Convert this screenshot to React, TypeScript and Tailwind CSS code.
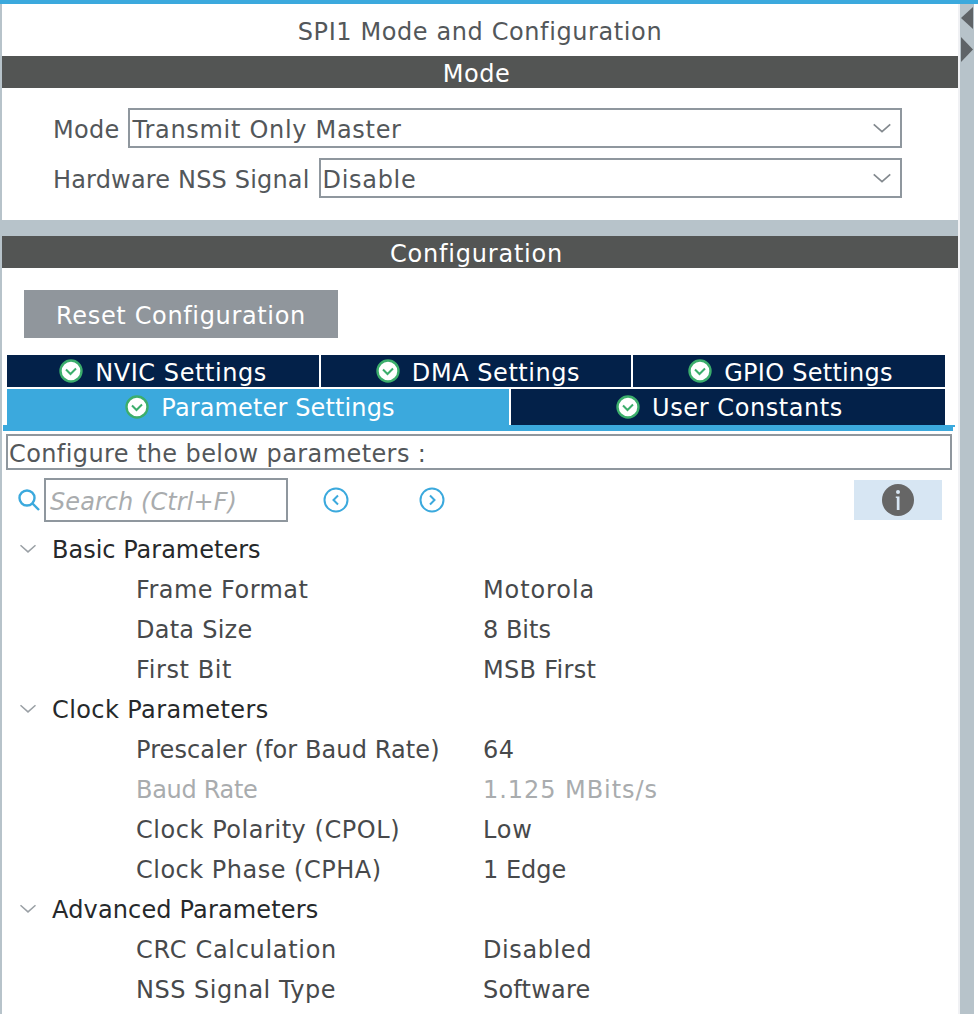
const font = "font-['DejaVu_Sans',sans-serif]";

function Chevron({ className }: { className: string }) {
  return (
    <svg viewBox="0 0 20 12" className={className} fill="none" stroke="currentColor" strokeWidth="1.8">
      <path d="M1 1.5 10 9.5 19 1.5" />
    </svg>
  );
}

function CheckIcon() {
  return (
    <svg viewBox="0 0 24 24" className="h-6 w-6 shrink-0">
      <circle cx="12" cy="12" r="10.5" fill="#fff" stroke="#3cae6c" strokeWidth="2.4" />
      <path d="M7 10.5 11.5 15 17 9.5" fill="none" stroke="#3cae6c" strokeWidth="2" />
    </svg>
  );
}

function Tab({ label, className, textClass }: { label: string; className: string; textClass: string }) {
  return (
    <div className={`flex items-center justify-center gap-3 text-white ${className}`}>
      <CheckIcon />
      <span className={textClass}>{label}</span>
    </div>
  );
}

function Select({ value, className }: { value: string; className: string }) {
  return (
    <div className={`flex h-10 flex-1 items-center justify-between border-2 border-[#8f979e] pr-2 ${className}`}>
      <span className="pt-1 tracking-[0.7px]">{value}</span>
      <Chevron className="h-[11px] w-5 text-[#83898e]" />
    </div>
  );
}

function NavButton({ dir }: { dir: "left" | "right" }) {
  return (
    <svg viewBox="0 0 26 26" className="h-[26px] w-[26px]" fill="none" stroke="#3ba9dd" strokeWidth="2">
      <circle cx="13" cy="13" r="11.5" />
      <path d={dir === "left" ? "M15 8.5 10.5 13 15 17.5" : "M11 8.5 15.5 13 11 17.5"} />
    </svg>
  );
}

type Param = { name: string; value: string; dim?: boolean; nameTrack: string; valueTrack: string };

const groups: { title: string; track: string; params: Param[] }[] = [
  {
    title: "Basic Parameters",
    track: "tracking-[0px]",
    params: [
      { name: "Frame Format", value: "Motorola", nameTrack: "tracking-[0.45px]", valueTrack: "tracking-[0.9px]" },
      { name: "Data Size", value: "8 Bits", nameTrack: "tracking-[0.25px]", valueTrack: "tracking-[0px]" },
      { name: "First Bit", value: "MSB First", nameTrack: "tracking-[0.6px]", valueTrack: "tracking-[0.3px]" },
    ],
  },
  {
    title: "Clock Parameters",
    track: "tracking-[0.4px]",
    params: [
      { name: "Prescaler (for Baud Rate)", value: "64", nameTrack: "tracking-[0.1px]", valueTrack: "tracking-[0.4px]" },
      { name: "Baud Rate", value: "1.125 MBits/s", dim: true, nameTrack: "tracking-[-0.3px]", valueTrack: "tracking-[0.95px]" },
      { name: "Clock Polarity (CPOL)", value: "Low", nameTrack: "tracking-[0.55px]", valueTrack: "tracking-[0.8px]" },
      { name: "Clock Phase (CPHA)", value: "1 Edge", nameTrack: "tracking-[0.5px]", valueTrack: "tracking-[0px]" },
    ],
  },
  {
    title: "Advanced Parameters",
    track: "tracking-[0.15px]",
    params: [
      { name: "CRC Calculation", value: "Disabled", nameTrack: "tracking-[0.7px]", valueTrack: "tracking-[0.6px]" },
      { name: "NSS Signal Type", value: "Software", nameTrack: "tracking-[0.5px]", valueTrack: "tracking-[0.2px]" },
    ],
  },
];

export default function App() {
  return (
    <div className={`flex h-[1014px] w-[978px] flex-col overflow-hidden bg-white text-[24px] leading-none text-[#53575a] ${font}`}>
      <div className="h-1 w-full shrink-0 bg-[#3ba9dd]" />
      <div className="flex min-h-0 flex-1">
        <div className="w-0.5 shrink-0 bg-[#b7c3ca]" />

        <div className="w-[956px] shrink-0 overflow-hidden bg-[#b7c3ca]">
          <div className="bg-white">
            <div className="flex h-[52px] items-center justify-center pt-[3px] tracking-[0.6px]">SPI1 Mode and Configuration</div>
            <div className="flex h-8 items-center justify-center bg-[#535554] pr-[7px] text-white">
              <span className="pt-1 tracking-[0.55px]">Mode</span>
            </div>
            <div className="flex h-[132px] flex-col gap-2.5 pl-[51px] pr-[56px] pt-5">
              <div className="flex items-center gap-2">
                <span className="pt-1 tracking-[0.3px]">Mode</span>
                <Select value="Transmit Only Master" className="pl-[3px]" />
              </div>
              <div className="flex items-center gap-[9px]">
                <span className="pt-1 tracking-[0.17px]">Hardware NSS Signal</span>
                <Select value="Disable" className="pl-0.5" />
              </div>
            </div>
          </div>

          <div className="mt-4 h-[778px] bg-white">
            <div className="flex h-8 items-center justify-center bg-[#535554] pr-[7px] text-white">
              <span className="pt-1 tracking-[0.8px]">Configuration</span>
            </div>

            <div className="ml-[22px] mt-[22px] flex h-12 w-[314px] items-center justify-center bg-[#90969c] text-white">
              <span className="pt-1 tracking-[0.65px]">Reset Configuration</span>
            </div>

            <div className="ml-[5px] mt-[17px] flex w-[938px] gap-0.5">
              <Tab label="NVIC Settings" textClass="pt-1 tracking-[0.57px]" className="h-8 w-[312px] bg-[#032149]" />
              <Tab label="DMA Settings" textClass="pt-1 tracking-[0.55px]" className="h-8 w-[310px] bg-[#032149] pl-1" />
              <Tab label="GPIO Settings" textClass="pt-1 tracking-[0.26px]" className="h-8 w-[312px] bg-[#032149] pl-[3px]" />
            </div>
            <div className="ml-[5px] mt-0.5 flex w-[938px] gap-0.5">
              <Tab label="Parameter Settings" textClass="pt-0.5 tracking-[0.13px]" className="h-9 w-[502px] bg-[#3ba9dd] pl-1" />
              <Tab label="User Constants" textClass="pt-0.5 tracking-[0.58px]" className="h-9 flex-1 bg-[#032149] pl-[3px]" />
            </div>
            <div className="ml-px h-0.5 w-[952px] bg-[#3ba9dd]" />
            <div className="ml-px h-1 w-[950px] bg-[#3ba9dd]" />

            <div className="ml-1 mt-[3px] flex h-9 w-[946px] items-center border-2 border-[#8f979e] pl-px">
              <span className="pt-1 tracking-[0.4px]">Configure the below parameters :</span>
            </div>

            <div className="mt-2 flex h-11 items-center">
              <svg viewBox="0 0 24 24" className="ml-[15px] h-6 w-6 shrink-0" fill="none" stroke="#3ba9dd" strokeWidth="2.4">
                <circle cx="10" cy="10" r="7.5" />
                <path d="M15.5 15.5 22 22" />
              </svg>
              <div className="ml-[3px] flex h-11 w-[244px] items-center border-2 border-[#8f979e] pl-1 italic text-[#a9acae]">
                <span className="pt-1 tracking-[0.07px]">Search (Ctrl+F)</span>
              </div>
              <div className="ml-[35px]"><NavButton dir="left" /></div>
              <div className="ml-[70px]"><NavButton dir="right" /></div>
              <div className="ml-[409px] flex h-10 w-[88px] items-center justify-center bg-[#d7e6f3]">
                <svg viewBox="0 0 32 32" className="h-8 w-8">
                  <circle cx="16" cy="16" r="16" fill="#666" />
                  <circle cx="16" cy="8" r="2" fill="#d7e6f3" />
                  <path d="M13.8 12.5H17.5V26H14.8V14H13.8Z" fill="#d7e6f3" />
                </svg>
              </div>
            </div>

            <div className="mt-[7px]">
              {groups.map((g) => (
                <div key={g.title}>
                  <div className="flex h-10 items-center text-[#26292b]">
                    <Chevron className="ml-[17px] h-2.5 w-[18px] text-[#9aa0a5]" />
                    <span className={`ml-[15px] pt-0.5 ${g.track}`}>{g.title}</span>
                  </div>
                  {g.params.map((p) => (
                    <div key={p.name} className={`flex h-10 items-center pl-[134px] ${p.dim ? "text-[#a9acae]" : "text-[#47494b]"}`}>
                      <span className={`w-[347px] pt-0.5 ${p.nameTrack}`}>{p.name}</span>
                      <span className={`pt-0.5 ${p.valueTrack}`}>{p.value}</span>
                    </div>
                  ))}
                </div>
              ))}
            </div>
          </div>
        </div>

        <div className="w-0.5 shrink-0 bg-[#f0f1f4]" />

        <div className="flex w-3.5 shrink-0 flex-col items-center bg-[#b7c3ca] pt-[3px]">
          <svg viewBox="0 0 12 22" className="h-[22px] w-3"><path d="M12 0V22L0 11Z" fill="#5e6367" /></svg>
          <svg viewBox="0 0 12 25" className="mt-2 h-[25px] w-3"><path d="M0 0V25L12 12.5Z" fill="#5e6367" /></svg>
        </div>
      </div>
    </div>
  );
}
